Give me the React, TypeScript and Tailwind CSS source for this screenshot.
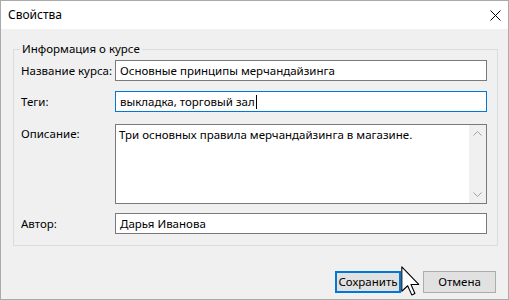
const font = "font-['Noto_Sans',sans-serif] text-[11.5px] leading-[16px] text-black"

function Field({ children, focused }: { children: React.ReactNode; focused?: boolean }) {
  return (
    <div
      className={`flex h-[21px] w-[372px] items-center bg-white px-[4px] border whitespace-nowrap ${
        focused ? 'border-[#0078d7]' : 'border-[#7a7a7a]'
      }`}
    >
      {children}
    </div>
  )
}

function Row({ label, children, className = '' }: { label: string; children: React.ReactNode; className?: string }) {
  return (
    <div className={`flex items-center ${className}`}>
      <span className="w-[94px] shrink-0 whitespace-nowrap">{label}</span>
      {children}
    </div>
  )
}

function Cursor() {
  return (
    <svg
      className="absolute left-[400px] top-[265px]"
      width="19"
      height="30"
      viewBox="0 0 12 19"
    >
      <path
        d="M0.5 0.5 L0.5 16 L4.2 12.5 L6.8 18.3 L8.8 17.4 L6.3 11.7 L11.2 11.7 Z"
        fill="#fff"
        stroke="#000"
        strokeWidth="0.7"
        strokeLinejoin="round"
      />
    </svg>
  )
}

export default function App() {
  return (
    <div className={`relative flex h-[300px] w-[509px] flex-col border border-[#aaaaaa] bg-[#f0f0f0] ${font}`}>
      {/* Title bar */}
      <div className="flex h-[28px] items-center justify-between bg-white pl-[7px] pr-[6px]">
        <span className="text-[12px]">Свойства</span>
        <svg width="11" height="11" viewBox="0 0 11 11" className="mr-[1px]">
          <path d="M0.5 0.5 L10.5 10.5 M10.5 0.5 L0.5 10.5" stroke="#000" strokeWidth="1" />
        </svg>
      </div>

      {/* Group box */}
      <fieldset className="ml-[12px] mr-[10px] mt-[12px] border border-[#dcdcdc] pl-[7px] pb-[11px] pt-[3px]">
        <legend className="ml-[-1px] px-[2px] leading-[16px]">Информация о курсе</legend>

        <Row label="Название курса:">
          <Field>Основные принципы мерчандайзинга</Field>
        </Row>

        <Row label="Теги:" className="mt-[10px]">
          <Field focused>
            <span>выкладка, торговый зал</span>
            <span className="ml-[1px] inline-block h-[14px] w-[1px] bg-black" />
          </Field>
        </Row>

        <div className="mt-[12px] flex items-start">
          <span className="w-[94px] shrink-0 pt-[2px]">Описание:</span>
          <div className="flex h-[80px] w-[372px] border border-[#7a7a7a] bg-white">
            <div className="flex-1 px-[3px] pt-[2px]">Три основных правила мерчандайзинга в магазине.</div>
            <div className="flex w-[17px] flex-col items-center justify-between bg-[#f0f0f0] py-[6px]">
              <svg width="9" height="5" viewBox="0 0 9 5">
                <path d="M0.5 4.5 L4.5 0.5 L8.5 4.5" fill="none" stroke="#a3a3a3" strokeWidth="1" />
              </svg>
              <svg width="9" height="5" viewBox="0 0 9 5">
                <path d="M0.5 0.5 L4.5 4.5 L8.5 0.5" fill="none" stroke="#a3a3a3" strokeWidth="1" />
              </svg>
            </div>
          </div>
        </div>

        <Row label="Автор:" className="mt-[9px]">
          <Field>Дарья Иванова</Field>
        </Row>
      </fieldset>

      {/* Buttons */}
      <div className="mt-auto mb-[6px] flex justify-end gap-[22px] pr-[12px]">
        <button className="h-[22px] w-[66px] border-2 border-[#0078d7] bg-[#e1e1e1] text-center leading-[18px] whitespace-nowrap">
          Сохранить
        </button>
        <button className="h-[22px] w-[73px] border border-[#adadad] bg-[#e1e1e1] text-center leading-[20px]">
          Отмена
        </button>
      </div>

      <Cursor />
    </div>
  )
}
